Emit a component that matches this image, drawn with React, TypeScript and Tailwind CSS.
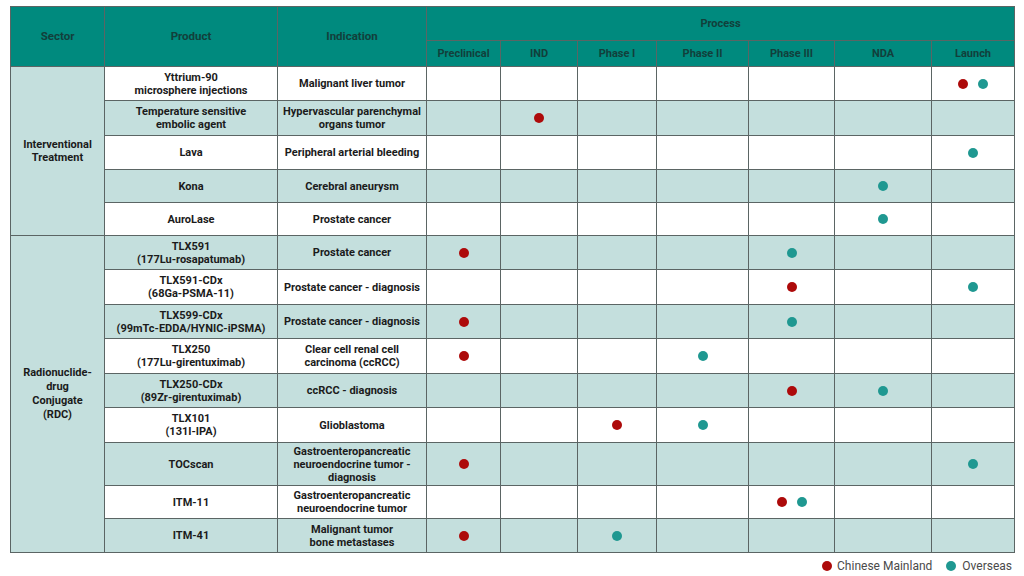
import React from "react";

type Dot = "r" | "t";
type Row = { product: string[]; indication: string[]; stages: Record<number, Dot[]> };

const STAGES = ["Preclinical", "IND", "Phase I", "Phase II", "Phase III", "NDA", "Launch"];

const rows: Row[] = [
  { product: ["Yttrium-90", "microsphere injections"], indication: ["Malignant liver tumor"], stages: { 6: ["r", "t"] } },
  { product: ["Temperature sensitive", "embolic agent"], indication: ["Hypervascular parenchymal", "organs tumor"], stages: { 1: ["r"] } },
  { product: ["Lava"], indication: ["Peripheral arterial bleeding"], stages: { 6: ["t"] } },
  { product: ["Kona"], indication: ["Cerebral aneurysm"], stages: { 5: ["t"] } },
  { product: ["AuroLase"], indication: ["Prostate cancer"], stages: { 5: ["t"] } },
  { product: ["TLX591", "(177Lu-rosapatumab)"], indication: ["Prostate cancer"], stages: { 0: ["r"], 4: ["t"] } },
  { product: ["TLX591-CDx", "(68Ga-PSMA-11)"], indication: ["Prostate cancer - diagnosis"], stages: { 4: ["r"], 6: ["t"] } },
  { product: ["TLX599-CDx", "(99mTc-EDDA/HYNIC-iPSMA)"], indication: ["Prostate cancer - diagnosis"], stages: { 0: ["r"], 4: ["t"] } },
  { product: ["TLX250", "(177Lu-girentuximab)"], indication: ["Clear cell renal cell", "carcinoma (ccRCC)"], stages: { 0: ["r"], 3: ["t"] } },
  { product: ["TLX250-CDx", "(89Zr-girentuximab)"], indication: ["ccRCC - diagnosis"], stages: { 4: ["r"], 5: ["t"] } },
  { product: ["TLX101", "(131I-IPA)"], indication: ["Glioblastoma"], stages: { 2: ["r"], 3: ["t"] } },
  { product: ["TOCscan"], indication: ["Gastroenteropancreatic", "neuroendocrine tumor -", "diagnosis"], stages: { 0: ["r"], 6: ["t"] } },
  { product: ["ITM-11"], indication: ["Gastroenteropancreatic", "neuroendocrine tumor"], stages: { 4: ["r", "t"] } },
  { product: ["ITM-41"], indication: ["Malignant tumor", "bone metastases"], stages: { 0: ["r"], 2: ["t"] } },
];

function DotEl({ c }: { c: Dot }) {
  return (
    <span
      className={
        c === "r"
          ? "block w-[10px] h-[10px] rounded-full bg-[#ad0a0a]"
          : "block w-[10px] h-[10px] rounded-full bg-[#1f9891]"
      }
    />
  );
}

function Lines({ lines }: { lines: string[] }) {
  return (
    <>
      {lines.map((l, i) => (
        <span key={i} className="block whitespace-nowrap">
          {l}
        </span>
      ))}
    </>
  );
}

export default function App() {
  const cell = "flex flex-col items-center justify-center text-center";
  const head = `${cell} bg-[#008a7e] text-[#123f3b]`;
  return (
    <div
      className="w-[1024px] h-[576px] bg-white pt-[6px] pl-[10px]"
      style={{ fontFamily: 'Roboto, "Noto Sans", Arial, sans-serif' }}
    >
      <div className="grid w-[1005px] bg-[#5b6564] gap-px border border-[#5b6564] grid-cols-[93px_172px_148px_73px_76px_78px_91px_85px_96px_82px] grid-rows-[33px_25px_33px_34px_33px_32px_32px_33px_34px_33px_34px_33px_34px_42px_32px_33px] text-[11px] leading-[13px] font-bold text-[#1b1b1b]">
        <div className={`${head} row-span-2 text-[11.5px]`}>Sector</div>
        <div className={`${head} row-span-2 text-[11.5px]`}>Product</div>
        <div className={`${head} row-span-2 text-[11.5px]`}>Indication</div>
        <div className={`${head} col-span-7`}>Process</div>
        {STAGES.map((s) => (
          <div key={s} className={head}>
            {s}
          </div>
        ))}
        {rows.map((r, i) => {
          const bg = i % 2 === 0 ? "bg-white" : "bg-[#c4dfdd]";
          return (
            <React.Fragment key={i}>
              {i === 0 && (
                <div className={`${cell} row-span-5 bg-[#c4dfdd]`}>
                  <Lines lines={["Interventional", "Treatment"]} />
                </div>
              )}
              {i === 5 && (
                <div className={`${cell} row-span-9 bg-[#c4dfdd] leading-[14px]`}>
                  <Lines lines={["Radionuclide-", "drug", "Conjugate", "(RDC)"]} />
                </div>
              )}
              <div className={`${cell} ${bg}`}>
                <Lines lines={r.product} />
              </div>
              <div className={`${cell} ${bg}`}>
                <Lines lines={r.indication} />
              </div>
              {STAGES.map((_, si) => (
                <div key={si} className={`flex items-center justify-center gap-[10px] ${bg}`}>
                  {(r.stages[si] || []).map((d, di) => (
                    <DotEl key={di} c={d} />
                  ))}
                </div>
              ))}
            </React.Fragment>
          );
        })}
      </div>
      <div className="flex justify-end items-center w-[1002px] mt-[6px] text-[12px] leading-[14px] text-[#4a4a4a]">
        <span className="block w-[10px] h-[10px] rounded-full bg-[#ad0a0a] mr-[5px]" />
        <span>Chinese Mainland</span>
        <span className="block w-[10px] h-[10px] rounded-full bg-[#1f9891] ml-[14px] mr-[6px]" />
        <span>Overseas</span>
      </div>
    </div>
  );
}
